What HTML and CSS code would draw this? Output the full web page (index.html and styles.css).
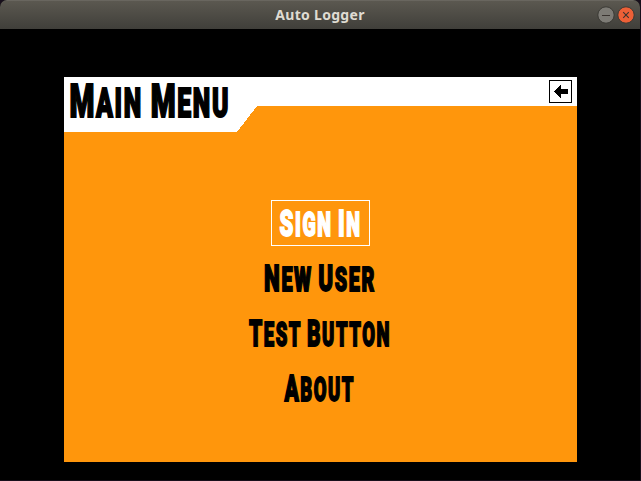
FILE: index.html
```
<!DOCTYPE html>
<html lang="en">
<head>
<meta charset="utf-8">
<title>Auto Logger</title>
<link rel="stylesheet" href="styles.css">
</head>
<body>
<div class="window">
  <header class="titlebar">
    <span class="spacer"></span>
    <h1 class="caption">Auto Logger</h1>
    <div class="controls">
      <svg class="control" viewBox="0 0 18 18"><circle class="minimize" cx="9" cy="9" r="8.2"/><path class="mark" d="M5 9.5h8"/></svg>
      <svg class="control" viewBox="0 0 18 18"><circle class="close" cx="9" cy="9" r="8.2"/><path class="mark" d="M6.2 6.2l5.6 5.6M11.8 6.2l-5.6 5.6"/></svg>
    </div>
  </header>
  <main class="panel">
    <div class="heading">
      <svg class="tab" viewBox="0 0 193 55">
        <path class="tab-shape" d="M0 0H193V29L173 55H0Z"/>
        <text class="label large" x="5.5" y="40.3" textLength="160.5" lengthAdjust="spacingAndGlyphs">M<tspan class="small">ain</tspan> M<tspan class="small">enu</tspan></text>
      </svg>
      <div class="strip">
        <button class="back" aria-label="Back">
          <svg class="arrow" viewBox="0 0 14 14"><path d="M0 6h1V5h1V4h1V3h1V2h1V1h1V0h1v4h7v5H7v4H6v-1H5v-1H4v-1H3V9H2V8H1V7H0Z"/></svg>
        </button>
      </div>
    </div>
    <nav class="menu">
      <a class="item selected"><svg class="word" viewBox="0 0 160 44"><text class="label" x="38.5" y="35.4" textLength="82" lengthAdjust="spacingAndGlyphs">S<tspan class="small">ign</tspan> I<tspan class="small">n</tspan></text></svg></a>
      <a class="item"><svg class="word" viewBox="0 0 160 44"><text class="label" x="23" y="35.4" textLength="112" lengthAdjust="spacingAndGlyphs">N<tspan class="small">ew</tspan> U<tspan class="small">ser</tspan></text></svg></a>
      <a class="item"><svg class="word" viewBox="0 0 160 44"><text class="label" x="8" y="35.4" textLength="142" lengthAdjust="spacingAndGlyphs">T<tspan class="small">est</tspan> B<tspan class="small">utton</tspan></text></svg></a>
      <a class="item"><svg class="word" viewBox="0 0 160 44"><text class="label" x="43.5" y="35.4" textLength="70.5" lengthAdjust="spacingAndGlyphs">A<tspan class="small">bout</tspan></text></svg></a>
    </nav>
  </main>
</div>
</body>
</html>
```
FILE: styles.css
```
* { box-sizing: border-box; }
body { margin: 0; background: #170f1b; overflow: hidden; }
.window { width: 640px; height: 480px; background: #000; border-radius: 7px 7px 0 0; overflow: hidden; }
.titlebar {
  display: grid;
  grid-template-columns: 1fr auto 1fr;
  align-items: center;
  height: 29px;
  padding-right: 5px;
  padding-left: 5px;
  background: linear-gradient(#5b5850, #403f3a);
  border-top: 1px solid #69665f;
}
.caption { margin: 0; font: 700 14px/26px "Noto Sans", sans-serif; color: #dfdbd2; letter-spacing: .3px; }
.controls { display: flex; justify-content: flex-end; gap: 2px; }
.control { width: 18px; height: 18px; }
.minimize { fill: #7d7b75; stroke: #3a3934; }
.close { fill: #ed6037; stroke: #3a3934; }
.mark { fill: none; stroke: #3a3430; stroke-width: 1.1; }
.panel { width: 513px; height: 385px; margin: 48px 0 0 64px; background: #ff960c; }
.heading { display: flex; height: 55px; }
.tab { width: 193px; height: 55px; display: block; overflow: visible; }
.tab-shape { fill: #fff; shape-rendering: crispEdges; }
.strip { flex: 1; height: 29px; display: flex; justify-content: flex-end; padding: 3px 5px 0 0; background: #fff; }
.back { display: flex; width: 23px; height: 23px; padding: 4px 0 0 4px; border: 1px solid #000; border-radius: 0; background: #fff; }
.arrow { width: 14px; height: 14px; shape-rendering: crispEdges; }
.menu { display: flex; flex-direction: column; align-items: center; gap: 9px; padding-top: 68px; }
.item { display: flex; justify-content: center; width: 99px; height: 46px; border: 1px solid transparent; color: #000; }
.selected { color: #fff; border-color: #fff; }
.word { flex: none; width: 160px; height: 44px; overflow: visible; }
.label {
  font: 900 37.5px Roboto, sans-serif;
  text-transform: uppercase;
  fill: currentColor;
  stroke: currentColor;
  stroke-width: 1.8px;
  letter-spacing: 2.7px;
  word-spacing: -3px;
}
.label .small { font-size: 33px; }
.label.large { font-size: 47px; stroke-width: 2px; word-spacing: -1px; }
.large .small { font-size: 41px; }
```
